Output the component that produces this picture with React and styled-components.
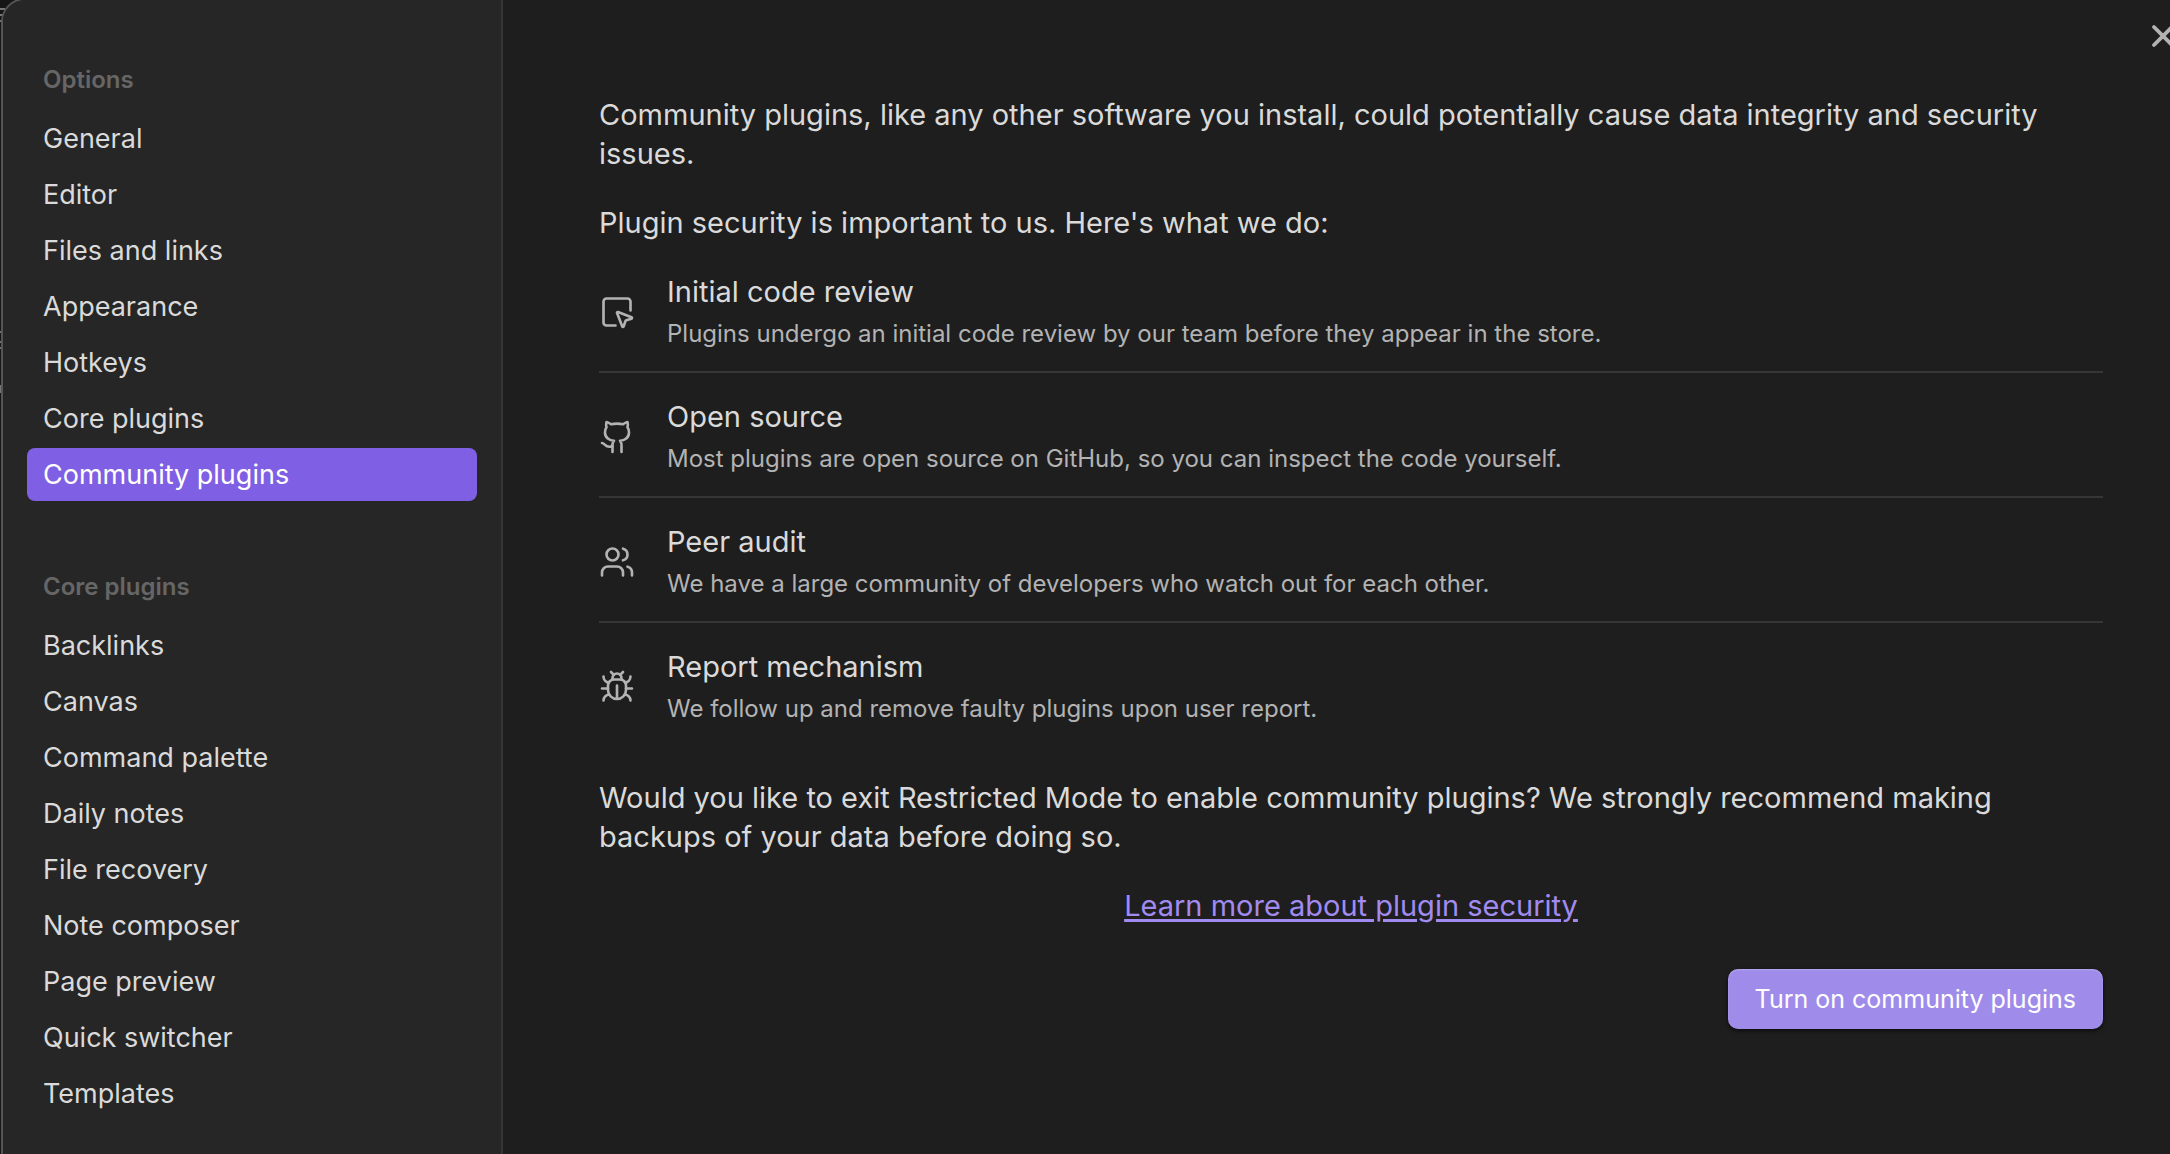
import { useState } from 'react';
import styled, { createGlobalStyle } from 'styled-components';
import { SquareMousePointer, Users, X } from 'lucide-react';

const navGroups = [
  {
    title: 'Options',
    items: ['General', 'Editor', 'Files and links', 'Appearance', 'Hotkeys', 'Core plugins', 'Community plugins'],
  },
  {
    title: 'Core plugins',
    items: [
      'Backlinks', 'Canvas', 'Command palette', 'Daily notes', 'File recovery',
      'Note composer', 'Page preview', 'Quick switcher', 'Templates',
    ],
  },
];

const GithubIcon = () => (
  <svg viewBox="0 0 24 24" aria-hidden="true">
    <path d="M15 22v-4a4.8 4.8 0 0 0-1-3.500c3 0 6-2 6-5.500.080-1.250-.270-2.480-1-3.500.280-1.150.280-2.350 0-3.500 0 0-1 0-3 1.500-2.640-.500-5.360-.500-8 0C6 2 5 2 5 2c-.300 1.150-.300 2.350 0 3.500A5.403 5.403 0 0 0 4 9c0 3.500 3 5.500 6 5.500-.390.490-.680 1.050-.850 1.650-.170.600-.220 1.230-.150 1.850v4" />
    <path d="M9 18c-4.510 2-5-2-7-2" />
  </svg>
);

const BugIcon = () => (
  <svg viewBox="0 0 24 24" aria-hidden="true">
    <path d="m8 2 1.880 1.880M14.120 3.880 16 2" />
    <path d="M9 7.130v-1a3.003 3.003 0 1 1 6 0v1" />
    <path d="M12 20c-3.300 0-6-2.700-6-6v-3a4 4 0 0 1 4-4h4a4 4 0 0 1 4 4v3c0 3.300-2.700 6-6 6M12 20v-9" />
    <path d="M6.530 9C4.600 8.800 3 7.100 3 5M6 13H2M3 21c0-2.100 1.700-3.900 3.800-4M20.970 5c0 2.100-1.600 3.800-3.500 4M22 13h-4M17.200 17c2.100.100 3.800 1.900 3.800 4" />
  </svg>
);

const measures = [
  {
    icon: SquareMousePointer,
    name: 'Initial code review',
    text: 'Plugins undergo an initial code review by our team before they appear in the store.',
  },
  {
    icon: GithubIcon,
    name: 'Open source',
    text: 'Most plugins are open source on GitHub, so you can inspect the code yourself.',
  },
  {
    icon: Users,
    name: 'Peer audit',
    text: 'We have a large community of developers who watch out for each other.',
  },
  {
    icon: BugIcon,
    name: 'Report mechanism',
    text: 'We follow up and remove faulty plugins upon user report.',
  },
];

const App = () => {
  const [activeTab, setActiveTab] = useState('Community plugins');

  return (
    <Workspace>
      <GlobalStyle />
      {/* edge of the note view that peeks out behind the modal */}
      <Backdrop width="8" height="400" aria-hidden="true">
        <path d="M0 9h5M0 15h4M0 21h2M0 332h1M0 342h1M0 348h1" />
        <path d="M0 385v8" />
      </Backdrop>
      <Modal role="dialog" aria-label="Settings">
        <Sidebar>
          {navGroups.map(group => (
            <NavGroup key={group.title}>
              <GroupTitle>{group.title}</GroupTitle>
              {group.items.map(item => (
                <NavItem key={item} $active={item === activeTab} onClick={() => setActiveTab(item)}>
                  {item}
                </NavItem>
              ))}
            </NavGroup>
          ))}
        </Sidebar>
        <Content>
          <Paragraph>
            Community plugins, like any other software you install, could potentially cause data integrity and security issues.
          </Paragraph>
          <Paragraph>Plugin security is important to us. Here's what we do:</Paragraph>
          <MeasureList>
            {measures.map(({ icon: Icon, name, text }) => (
              <Measure key={name}>
                <Icon />
                <div>
                  <MeasureName>{name}</MeasureName>
                  <MeasureText>{text}</MeasureText>
                </div>
              </Measure>
            ))}
          </MeasureList>
          <Paragraph>
            Would you like to exit Restricted Mode to enable community plugins? We strongly recommend making backups of your data before doing so.
          </Paragraph>
          <LinkRow>
            <a href="#plugin-security">Learn more about plugin security</a>
          </LinkRow>
          <ButtonRow>
            <PrimaryButton>Turn on community plugins</PrimaryButton>
          </ButtonRow>
        </Content>
        <CloseButton aria-label="Close">
          <X size={36} strokeWidth={2.5} />
        </CloseButton>
      </Modal>
    </Workspace>
  );
};

export default App;

const GlobalStyle = createGlobalStyle`
  * {
    box-sizing: border-box;
  }

  body {
    margin: 0;
    background: #161616;
    color: #dadada;
    font-family: Inter, 'Liberation Sans', sans-serif;
    font-size: 29px;
    line-height: 39px;
  }

  button {
    font: inherit;
    border: none;
    cursor: pointer;
  }
`;

const Workspace = styled.div`
  position: relative;
  min-height: 100vh;
  padding-left: 1px;
  display: flex;
  overflow: hidden;
`;

const Backdrop = styled.svg`
  position: absolute;
  top: 0;
  left: 0;
  stroke: #777777;
  stroke-width: 2;
`;

const Modal = styled.div`
  position: relative;
  flex: 1;
  display: flex;
  margin-top: -2px;
  background: #1e1e1e;
  border-top: 2px solid #555555;
  border-left: 2px solid #555555;
  border-top-left-radius: 24px;
  overflow: hidden;
`;

const Sidebar = styled.nav`
  flex: 0 0 500px;
  padding: 60px 24px 0;
  background: #262626;
  border-right: 2px solid #363636;
`;

const NavGroup = styled.div`
  display: flex;
  flex-direction: column;
  gap: 3px;

  & + & {
    margin-top: 66px;
  }
`;

const GroupTitle = styled.div`
  height: 49px;
  padding: 0 16px;
  color: #666666;
  font-size: 24px;
  font-weight: 600;
`;

const NavItem = styled.button`
  height: 53px;
  padding: 0 16px;
  border-radius: 8px;
  text-align: left;
  font-size: 27px;
  color: ${props => (props.$active ? '#ffffff' : '#dadada')};
  background: ${props => (props.$active ? '#7f5fe3' : 'none')};
`;

const Content = styled.main`
  flex: 1;
  padding: 95px 67px 24px 96px;
`;

const Paragraph = styled.p`
  margin: 0 0 30px;
`;

const MeasureList = styled.ul`
  list-style: none;
  margin: 0 0 52px;
  padding: 0;
`;

const Measure = styled.li`
  display: flex;
  align-items: center;
  gap: 32px;
  padding: 24px 0 20px;
  border-top: 2px solid #363636;

  &:first-child {
    padding-top: 0;
    border-top: none;
  }

  &:last-child {
    padding-bottom: 0;
  }

  svg {
    flex: none;
    width: 36px;
    height: 36px;
    fill: none;
    stroke: #b3b3b3;
    stroke-width: 1.75;
    stroke-linecap: round;
    stroke-linejoin: round;
  }
`;

const MeasureName = styled.div`
  line-height: 39px;
`;

const MeasureText = styled.div`
  padding-top: 6px;
  font-size: 24px;
  line-height: 34px;
  color: #b3b3b3;
`;

const LinkRow = styled.div`
  text-align: center;

  a {
    color: #a28bf0;
    text-decoration-thickness: 3px;
    text-underline-offset: 3px;
  }
`;

const ButtonRow = styled.div`
  display: flex;
  justify-content: flex-end;
  margin-top: 44px;
`;

const PrimaryButton = styled.button`
  height: 60px;
  padding: 0 27px;
  border-radius: 10px;
  font-size: 25px;
  color: #ffffff;
  background: #9f8cea;
  box-shadow: 0 2px 4px rgba(0, 0, 0, 0.6), inset 0 1px 2px rgba(255, 255, 255, 0.25);
`;

const CloseButton = styled.button`
  position: absolute;
  top: 18px;
  right: -11px;
  display: flex;
  padding: 0;
  color: #b3b3b3;
  background: none;
`;
